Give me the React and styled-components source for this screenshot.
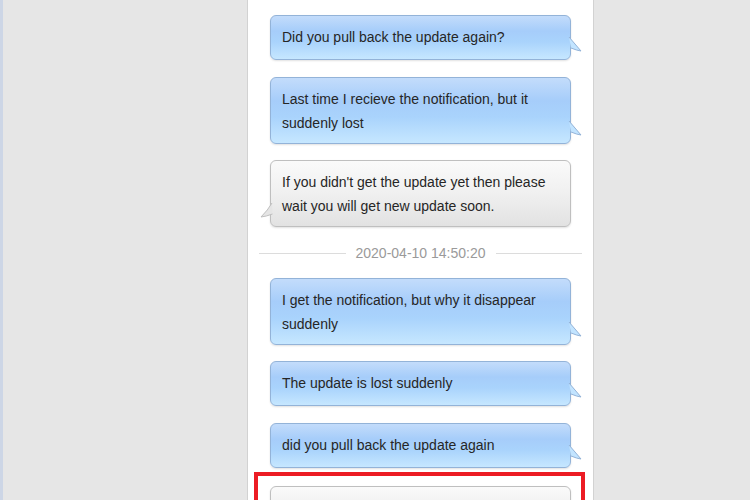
import React from 'react';
import styled, { createGlobalStyle, css } from 'styled-components';

const GlobalStyle = createGlobalStyle`
  html, body {
    margin: 0;
    padding: 0;
    height: 100%;
    overflow: hidden;
    background: #e6e6e6;
    font-family: 'Liberation Sans', Arial, sans-serif;
  }
`;

const Page = styled.div`
  display: flex;
  height: 500px;
  background: #e6e6e6;
`;

const EdgeStrip = styled.div`
  width: 3px;
  flex-shrink: 0;
  background: #cdd6e6;
`;

const Panel = styled.div`
  margin-left: 244px;
  width: 301px;
  padding: 15px 22px 0;
  background: #fff;
  border-left: 1px solid #d2d2d2;
  border-right: 1px solid #d2d2d2;
  display: flex;
  flex-direction: column;
  overflow: hidden;
`;

const Row = styled.div`
  position: relative;
  margin-bottom: ${(p) => p.$gap}px;
`;

const blue = css`
  background: linear-gradient(
    to bottom,
    #c3dcfb 0%,
    #a6cdfa 35%,
    #a9d3fc 60%,
    #c6e7ff 100%
  );
  border-color: #93b3d8;
`;

const gray = css`
  background: linear-gradient(to bottom, #fafafa 0%, #f0f0f0 50%, #e2e2e2 100%);
  border-color: #bfbfbf;
`;

const Bubble = styled.div`
  position: relative;
  box-sizing: border-box;
  width: 301px;
  min-height: 45px;
  padding: 9px 12px 8px 11px;
  border: 1px solid;
  border-radius: 6px;
  font-size: 14px;
  line-height: 24px;
  color: #262626;
  box-shadow: 0 1px 2px rgba(0, 0, 0, 0.12);
  ${(p) => (p.$mine ? blue : gray)}
`;

const Tail = styled.svg`
  position: absolute;
  bottom: 6px;
  width: 14px;
  height: 18px;
  overflow: visible;
  ${(p) =>
    p.$mine
      ? css`
          right: -13px;
        `
      : css`
          left: -13px;
        `}
`;

const Stamp = styled.div`
  display: flex;
  align-items: center;
  gap: 10px;
  margin: 18px -11px 16px;
  font-size: 14px;
  line-height: 17px;
  color: #9a9a9a;

  &::before,
  &::after {
    content: '';
    flex: 1;
    height: 1px;
    background: #dcdcdc;
  }
`;

const Highlight = styled.div`
  position: absolute;
  top: -14px;
  left: -16px;
  right: -14px;
  height: 60px;
  border: 4px solid #ec1c24;
  pointer-events: none;
`;

function BubbleTail({ mine }) {
  return (
    <Tail $mine={mine} viewBox="0 0 14 18">
      {mine ? (
        <path
          d="M0 2 L12 16 Q8 15.5 2 13"
          fill="#c2e4ff"
          stroke="#93b3d8"
          strokeWidth="1"
          strokeLinejoin="round"
        />
      ) : (
        <path
          d="M14 1 Q10 8 3 15 Q8 14.5 14.5 12"
          fill="#e5e5e5"
          stroke="#bfbfbf"
          strokeWidth="1"
          strokeLinejoin="round"
        />
      )}
    </Tail>
  );
}

const messages = [
  { id: 1, mine: true, text: 'Did you pull back the update again?', gap: 17 },
  { id: 2, mine: true, text: 'Last time I recieve the notification, but it suddenly lost', gap: 16 },
  {
    id: 3,
    mine: false,
    text: "If you didn't get the update yet then please wait you will get new update soon.",
    gap: 0,
  },
  { id: 'stamp', stamp: '2020-04-10 14:50:20' },
  { id: 4, mine: true, text: 'I get the notification, but why it disappear suddenly', gap: 16 },
  { id: 5, mine: true, text: 'The update is lost suddenly', gap: 17 },
  { id: 6, mine: true, text: 'did you pull back the update again', gap: 18 },
  // reply below the fold, only its top edge is in view
  { id: 7, mine: false, text: '', gap: 0, marked: true },
];

export default function App() {
  return (
    <>
      <GlobalStyle />
      <Page>
        <EdgeStrip />
        <Panel>
          {messages.map((m) =>
            m.stamp ? (
              <Stamp key={m.id}>{m.stamp}</Stamp>
            ) : (
              <Row key={m.id} $gap={m.gap}>
                <Bubble $mine={m.mine}>
                  {m.text}
                  <BubbleTail mine={m.mine} />
                </Bubble>
                {m.marked && <Highlight />}
              </Row>
            )
          )}
        </Panel>
      </Page>
    </>
  );
}
